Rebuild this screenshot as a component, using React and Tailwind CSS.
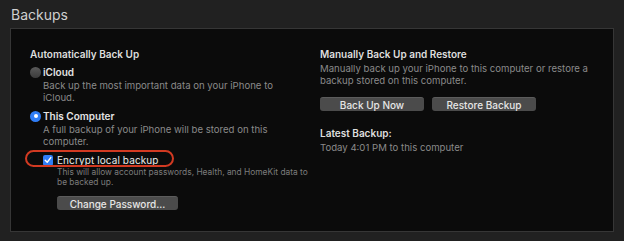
import React from "react";

function Radio({ checked }) {
  if (checked) {
    return (
      <span className="w-[11px] h-[11px] rounded-full bg-[#2f7df6] flex items-center justify-center shrink-0">
        <span className="w-[4px] h-[4px] rounded-full bg-white" />
      </span>
    );
  }
  return <span className="w-[11px] h-[11px] rounded-full bg-gradient-to-b from-[#5a5a5a] to-[#3c3c3c] shrink-0" />;
}

function Button({ children, className = "" }) {
  return (
    <div
      className={
        "h-[14px] rounded-[3px] bg-[#4b4b4b] border-t border-[#5c5c5c] flex items-center justify-center text-[10px] font-medium text-[#e6e6e6] leading-none " +
        className
      }
    >
      {children}
    </div>
  );
}

export default function App() {
  return (
    <div className="w-[624px] h-[241px] bg-[#212121] pl-[10px] pt-[5px] overflow-hidden font-['Inter',sans-serif]">
      <h1 className="text-[14px] leading-[20px] text-[#cfcfcf] pl-[1px]">Backups</h1>
      <div className="mt-[3px] w-[604px] h-[204px] border border-[#363636] bg-[#0b0b0b] grid grid-cols-[290px_1fr] pl-[19px] pt-[18px]">
        <div className="flex flex-col text-[9.6px]">
          <div className="leading-[14px] text-[10px] font-semibold text-[#dedede]">Automatically Back Up</div>
          <div className="mt-[4px] h-[14px] flex items-center gap-[2px]">
            <Radio />
            <span className="font-semibold text-[#e4e4e4] text-[10px]">iCloud</span>
          </div>
          <p className="mt-[1px] pl-[13px] leading-[12px] text-[#8a8a8a]">
            Back up the most important data on your iPhone to
            <br />
            iCloud.
          </p>
          <div className="mt-[5px] h-[14px] flex items-center gap-[2px]">
            <Radio checked />
            <span className="font-semibold text-[#e4e4e4] text-[10px]">This Computer</span>
          </div>
          <p className="mt-[1px] pl-[13px] leading-[12px] text-[#8a8a8a]">
            A full backup of your iPhone will be stored on this
            <br />
            computer.
          </p>
          <div className="relative mt-[5px] h-[14px] pl-[13px] flex items-center gap-[4px]">
            <span className="w-[10px] h-[11px] rounded-[2px] bg-[#2f7df6] flex items-center justify-center shrink-0">
              <svg width="8" height="8" viewBox="0 0 8 8">
                <path d="M1.2 4.2 L3.2 6.2 L6.8 1.6" fill="none" stroke="white" strokeWidth="1.4" strokeLinecap="round" strokeLinejoin="round" />
              </svg>
            </span>
            <span className="text-[10px] text-[#ececec] tracking-[0.1px]">Encrypt local backup</span>
            <span className="absolute left-[-5px] top-[-3px] w-[149px] h-[17px] rounded-full border-2 border-[#d23a22]" />
          </div>
          <p className="pl-[27px] text-[8.4px] leading-[10px] text-[#7c7c7c] whitespace-nowrap">
            This will allow account passwords, Health, and HomeKit data to
            <br />
            be backed up.
          </p>
          <Button className="mt-[9px] ml-[27px] w-[121px]">Change Password...</Button>
        </div>
        <div className="flex flex-col text-[9.6px]">
          <div className="leading-[14px] text-[10px] font-semibold text-[#dedede]">Manually Back Up and Restore</div>
          <p className="mt-[2px] leading-[12px] text-[#8a8a8a] whitespace-nowrap">
            Manually back up your iPhone to this computer or restore a
            <br />
            backup stored on this computer.
          </p>
          <div className="mt-[10px] flex gap-[8px]">
            <Button className="w-[104px]">Back Up Now</Button>
            <Button className="w-[104px]">Restore Backup</Button>
          </div>
          <div className="mt-[15px] leading-[14px] text-[10px] font-semibold text-[#dedede]">Latest Backup:</div>
          <div className="mt-[2px] leading-[12px] text-[#8a8a8a]">Today 4:01 PM to this computer</div>
        </div>
      </div>
    </div>
  );
}
